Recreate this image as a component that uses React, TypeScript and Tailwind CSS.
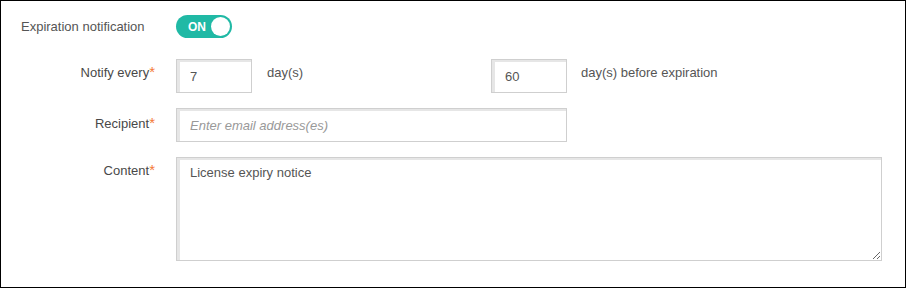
import React from "react";

const font = { fontFamily: '"Liberation Sans", Arial, sans-serif' };

function Label({ text }: { text: string }) {
  return (
    <div className="w-[155px] shrink-0 pr-[1px] text-right text-[13px] leading-[16px] text-[#484848]">
      {text}
      <span className="text-[15px] text-[#f47a38]">*</span>
    </div>
  );
}

const inputCls =
  "h-[34px] border border-[#cfcfcf] bg-white pl-[13px] text-[13px] text-[#555] shadow-[inset_3px_2px_0_#e6e6e6] outline-none placeholder:italic placeholder:text-[#999]";

export default function App() {
  return (
    <div
      style={font}
      className="h-[288px] w-[906px] border border-black bg-white"
    >
      <div className="flex items-center pt-[14px]">
        <div className="w-[175px] shrink-0 pl-[20px] text-[13px] text-[#555]">
          Expiration notification
        </div>
        <div className="flex h-[23px] w-[56px] items-center justify-between rounded-full bg-[#20b9a5] pl-[12px] pr-[2px]">
          <span className="text-[12px] font-bold text-white">ON</span>
          <span className="h-[19px] w-[19px] rounded-full bg-white" />
        </div>
      </div>

      <div className="mt-[21px] flex items-start">
        <div className="pt-[5px]">
          <Label text="Notify every" />
        </div>
        <div className="ml-[20px] flex items-start">
          <input className={`${inputCls} w-[76px]`} defaultValue="7" />
          <span className="ml-[15px] w-[224px] pt-[4px] text-[13px] text-[#555]">
            day(s)
          </span>
          <input className={`${inputCls} w-[76px]`} defaultValue="60" />
          <span className="ml-[14px] pt-[4px] text-[13px] text-[#555]">
            day(s) before expiration
          </span>
        </div>
      </div>

      <div className="mt-[15px] flex items-start">
        <div className="pt-[7px]">
          <Label text="Recipient" />
        </div>
        <input
          className={`${inputCls} ml-[20px] w-[391px]`}
          placeholder="Enter email address(es)"
        />
      </div>

      <div className="mt-[15px] flex items-start">
        <div className="pt-[5px]">
          <Label text="Content" />
        </div>
        <textarea
          className="ml-[20px] h-[104px] w-[706px] border border-[#cfcfcf] bg-white pl-[13px] pt-[5px] text-[13px] text-[#555] shadow-[inset_3px_2px_0_#e6e6e6] outline-none"
          defaultValue="License expiry notice"
        />
      </div>
    </div>
  );
}
